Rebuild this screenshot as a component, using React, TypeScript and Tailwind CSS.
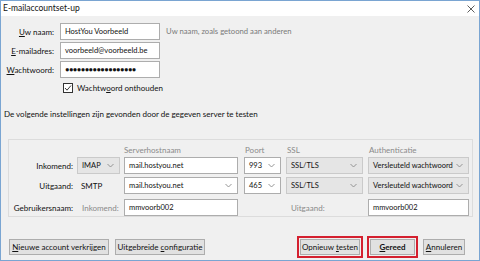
import React from "react";

const Chevron = () => (
  <svg width="7" height="5" viewBox="0 0 7 5" className="shrink-0">
    <path d="M0.5 1 L3.5 4 L6.5 1" fill="none" stroke="#8a8a8a" strokeWidth="0.9" />
  </svg>
);

function Input({ w, value, combo, gray }: { w: string; value: string; combo?: boolean; gray?: boolean }) {
  return (
    <div
      className={`${w} h-[17px] flex items-center justify-between pl-[4px] pr-[5px] border text-[7.5px] ${
        gray ? "bg-[#e5e5e5] border-[#cacaca]" : "bg-white border-[#adadad]"
      } text-[#111]`}
    >
      <span className="whitespace-nowrap">{value}</span>
      {combo && <Chevron />}
    </div>
  );
}

function Btn({ label, w, red }: { label: React.ReactNode; w: string; red?: boolean }) {
  const inner = (
    <div className={`${w} h-[16px] flex items-center justify-center bg-[#e1e1e1] border border-[#adadad] text-[#111] whitespace-nowrap`}>
      {label}
    </div>
  );
  if (red) return <div className="p-[1px] border-2 border-[#d4202f]">{inner}</div>;
  return inner;
}

export default function App() {
  return (
    <div
      className="w-[480px] h-[261px] bg-[#f0f0f0] border border-[#7aa5d2] flex flex-col text-[8px] leading-none text-[#111] overflow-hidden"
      style={{ fontFamily: 'Lato, "Noto Sans", sans-serif' }}
    >
      <div className="h-[15px] bg-white flex items-center justify-between pl-[2px] pr-[4px] shrink-0">
        <span className="text-[8.5px]">E-mailaccountset-up</span>
        <svg width="8" height="8" viewBox="0 0 8 8">
          <path d="M0.5 0.5 L7.5 7.5 M7.5 0.5 L0.5 7.5" stroke="#333" strokeWidth="0.8" />
        </svg>
      </div>

      <div className="flex flex-col pt-[7px]">
        <div className="grid grid-cols-[53px_100px_auto] gap-x-[6px] gap-y-[2px] items-center">
          <span className="text-right"><u>U</u>w naam:</span>
          <Input w="w-[100px]" value="HostYou Voorbeeld" />
          <span className="text-[#7a7a7a] whitespace-nowrap text-[7.7px]">Uw naam, zoals getoond aan anderen</span>
          <span className="text-right"><u>E</u>-mailadres:</span>
          <Input w="w-[100px]" value="voorbeeld@voorbeeld.be" />
          <span />
          <span className="text-right"><u>W</u>achtwoord:</span>
          <div className="w-[100px] h-[17px] flex items-center pl-[4px] bg-white border border-[#adadad] tracking-[-0.6px] text-[7.5px]" style={{ fontFamily: '"Noto Sans", sans-serif' }}>
            ●●●●●●●●●●●●●●●●●●
          </div>
          <span />
        </div>

        <div className="flex items-center ml-[62px] mt-[5px] gap-[4px]">
          <div className="w-[10px] h-[10px] border border-[#333] bg-white flex items-center justify-center">
            <svg width="8" height="8" viewBox="0 0 8 8">
              <path d="M1 4 L3 6.2 L7 1.5" fill="none" stroke="#222" strokeWidth="0.9" />
            </svg>
          </div>
          <span>Wachtw<u>o</u>ord onthouden</span>
        </div>

        <div className="ml-[3px] mt-[17px]">De volgende instellingen zijn gevonden door de gegeven server te testen</div>

        <div className="mt-[21px] ml-[7px] mr-[6px] h-[78px] border border-[#dcdcdc] flex flex-col pt-[6px]">
          <div className="flex items-center text-[#8a8a8a] h-[10px]">
            <span className="ml-[115px] w-[121px]">Serverhostnaam</span>
            <span className="w-[42px]">Poort</span>
            <span className="w-[82px]">SSL</span>
            <span>Authenticatie</span>
          </div>
          <div className="flex items-center mt-[3px]">
            <span className="w-[64px] text-right">Inkomend:</span>
            <div className="ml-[4px]"><Input w="w-[43px]" value="IMAP" combo gray /></div>
            <div className="ml-[4px]"><Input w="w-[114px]" value="mail.hostyou.net" /></div>
            <div className="ml-[6px]"><Input w="w-[37px]" value="993" combo /></div>
            <div className="ml-[5px]"><Input w="w-[77px]" value="SSL/TLS" combo gray /></div>
            <div className="ml-[5px]"><Input w="w-[101px]" value="Versleuteld wachtwoord" combo gray /></div>
          </div>
          <div className="flex items-center mt-[3px]">
            <span className="w-[64px] text-right">Uitgaand:</span>
            <div className="ml-[4px] w-[43px] h-[17px] flex items-center pl-[4px]">SMTP</div>
            <div className="ml-[4px]"><Input w="w-[114px]" value="mail.hostyou.net" combo /></div>
            <div className="ml-[6px]"><Input w="w-[37px]" value="465" combo /></div>
            <div className="ml-[5px]"><Input w="w-[77px]" value="SSL/TLS" combo gray /></div>
            <div className="ml-[5px]"><Input w="w-[101px]" value="Versleuteld wachtwoord" combo gray /></div>
          </div>
          <div className="flex items-center mt-[5px]">
            <span className="w-[64px] text-right">Gebruikersnaam:</span>
            <span className="ml-[9px] w-[42px] text-[#8a8a8a]">Inkomend:</span>
            <Input w="w-[114px]" value="mmvoorb002" />
            <span className="ml-[53px] w-[77px] text-[#8a8a8a]">Uitgaand:</span>
            <Input w="w-[101px]" value="mmvoorb002" />
          </div>
        </div>

        <div className="flex items-center mt-[19px] pl-[8px] pr-[14px]">
          <Btn w="w-[100px]" label={<span><u>N</u>ieuwe account verkrijgen</span>} />
          <div className="ml-[6px]">
            <Btn w="w-[90px]" label={<span>Uitgebreide <u>c</u>onfiguratie</span>} />
          </div>
          <div className="flex-1" />
          <Btn red w="w-[60px]" label={<span>Opnieuw <u>t</u>esten</span>} />
          <div className="ml-[4px]">
            <Btn red w="w-[45px]" label={<span className="font-bold"><u>G</u>ereed</span>} />
          </div>
          <div className="ml-[5px]">
            <Btn w="w-[42px]" label={<span><u>A</u>nnuleren</span>} />
          </div>
        </div>
      </div>
    </div>
  );
}
